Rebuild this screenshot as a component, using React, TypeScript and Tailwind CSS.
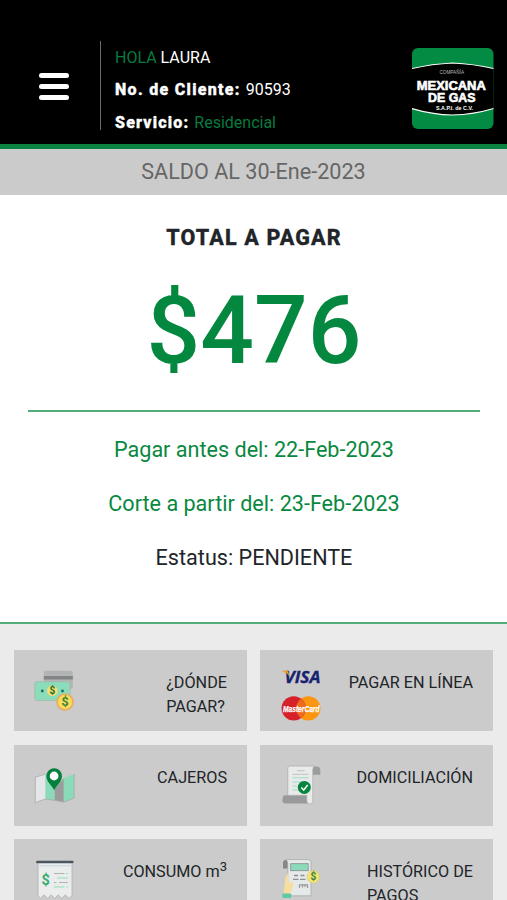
import React from 'react'

function Logo() {
    return (
        <svg width="82" height="82" viewBox="0 0 82 82" fontFamily="Liberation Sans, Arial, sans-serif" fontWeight="bold" fill="#fff">
            <rect width="81.5" height="81" y="0" rx="6" fill="#038a43" />
            <path d="M0 20.5Q20 16 40.5 15Q62 16 81.5 20.5V60.5Q62 66.5 40.5 67Q20 66.5 0 60.5Z" fill="#000" />
            <path d="M0 20.5Q20 16 40.5 15Q62 16 81.5 20.5M0 60.5Q20 66.5 40.5 67Q62 66.5 81.5 60.5" fill="none" stroke="#fff" strokeWidth="1.2" />
            <text x="27.5" y="26.3" fontSize="4.6" fontWeight="normal" fill="#bbb" textLength="24.5" lengthAdjust="spacingAndGlyphs">COMPAÑÍA</text>
            <text x="4.8" y="41.7" fontSize="12.5" stroke="#fff" strokeWidth=".6" textLength="69" lengthAdjust="spacingAndGlyphs">MEXICANA</text>
            <text x="16" y="54.4" fontSize="12.5" stroke="#fff" strokeWidth=".6" textLength="47.5" lengthAdjust="spacingAndGlyphs">DE GAS</text>
            <text x="24" y="61.5" fontSize="5.2" textLength="37" lengthAdjust="spacingAndGlyphs">S.A.P.I. de C.V.</text>
        </svg>
    )
}

function CashIcon() {
    return (
        <svg width="42" height="42" viewBox="0 0 42 42" fontFamily="Roboto, sans-serif" fontWeight="bold" textAnchor="middle">
            <rect x="9.8" y=".8" width="29" height="18" rx="1.5" fill="#b2b4b5" />
            <rect x="9.8" y="6" width="29" height="3.5" fill="#828586" />
            <rect x=".8" y="11.7" width="35.2" height="18.8" rx="1.8" fill="#8bdcb9" stroke="#a9b5b0" strokeWidth=".8" />
            <circle cx="18.3" cy="20.8" r="5.3" fill="#f3df72" />
            <circle cx="8.3" cy="21" r="1.4" fill="#176d65" />
            <circle cx="28.5" cy="21" r="1.4" fill="#176d65" />
            <text x="18.3" y="24.4" fontSize="10" fill="#236a2c">$</text>
            <circle cx="31" cy="32" r="8" fill="#f8dc59" stroke="#e8ab65" strokeWidth="1.6" />
            <text x="31" y="36.4" fontSize="12.5" fill="#3c8438">$</text>
        </svg>
    )
}

function CardsIcon() {
    return (
        <svg width="42" height="54" viewBox="0 0 42 54" className="overflow-visible" fontStyle="italic" fontWeight="bold">
            <text x="4.5" y="12.6" fontSize="16" fontFamily="Open Sans, sans-serif" fill="#17216f" stroke="#17216f" strokeWidth=".3" textLength="36" lengthAdjust="spacingAndGlyphs">VISA</text>
            <path d="M2.5 1H7.5L9.2 5.5Q6.5 2.2 2.5 1Z" fill="#ee9f20" stroke="#ee9f20" strokeWidth=".5" />
            <circle cx="28.3" cy="38.4" r="12.1" fill="#fc9510" />
            <circle cx="13.7" cy="38.4" r="12.1" fill="#d6212b" />
            <path d="M21 28.7A12.1 12.1 0 0 1 21 48.1A12.1 12.1 0 0 1 21 28.7Z" fill="#ed6b1c" />
            <text x="3" y="41.8" fontSize="8.5" fontFamily="Liberation Sans, Arial, sans-serif" fill="#fff" stroke="#fff" strokeWidth=".25" textLength="36.5" lengthAdjust="spacingAndGlyphs">MasterCard</text>
        </svg>
    )
}

function MapIcon() {
    return (
        <svg width="42" height="42" viewBox="0 0 42 42">
            <path d="M1.3 12.3L11.5 9V34L1.3 37.6Z" fill="#e4e6e7" />
            <path d="M11.5 9L20.7 12V35.5L11.5 34Z" fill="#8bdab9" />
            <path d="M20.7 23L29.8 13V37L20.7 35.2Z" fill="#999c9a" />
            <path d="M20.7 13H29.8L20.7 24Z" fill="#c9cdcb" />
            <path d="M29.8 13L40.2 9V33L29.8 37.2Z" fill="#8bdab9" />
            <path d="M1.3 12.3L11.5 9M40.2 9V33L29.8 37.2L20.7 35.4L11.5 34L1.3 37.6V12.3" fill="none" stroke="#aaa" strokeWidth=".8" />
            <path d="M20.2 25.2C18 20.5 12.4 17 12.4 11A7.8 7.8 0 0 1 28 11C28 17 22.4 20.5 20.2 25.2Z" fill="#04803d" />
            <circle cx="20.1" cy="11" r="4.4" fill="#fff" />
        </svg>
    )
}

function DocumentIcon() {
    return (
        <svg width="42" height="42" viewBox="0 0 42 42">
            <path d="M30 1.4H36.5Q40.3 1.4 40.3 5V9.8H32Z" fill="#9a9c9d" />
            <path d="M3.6 30.3H28V38.6H6Q2.3 38.6 2.3 35Z" fill="#989a9b" />
            <path d="M7.8 30.3V3.2Q7.8 1 10 1H35Q32.8 1.5 32.8 4.4V35.5Q32.8 39 29.8 39Q27 39 26.8 35.5V30.3Z" fill="#e9ebeb" stroke="#aaa" strokeWidth=".7" />
            <path d="M17 5.7H24.5M12.5 9.3H28.5" stroke="#b9bcbc" strokeWidth=".9" />
            <path d="M12.5 12.8H28.5M12.5 17H22M12.5 21H17M12.5 25H18" stroke="#9bdcc2" strokeWidth="1" />
            <circle cx="24.3" cy="22.4" r="6.5" fill="#078440" />
            <path d="M21.3 22.5L23.7 25L27.7 20" fill="none" stroke="#fff" strokeWidth="1.5" />
        </svg>
    )
}

function ReceiptIcon() {
    return (
        <svg width="42" height="42" viewBox="0 0 42 42">
            <path d="M4 3.5H38V36.3L35.2 39.5L31.4 35.8L27.7 39.5L24.2 35.8L20.8 39.5L17.2 35.8L13.7 39.5L10 35.8L6.5 39.5L4 36.3Z" fill="#ebecec" stroke="#aaa" strokeWidth=".7" />
            <path d="M4 6.8H38" stroke="#d2dbe3" strokeWidth="1.5" />
            <rect x="2" y="1.8" width="37.6" height="2.5" rx="1.2" fill="#4c5661" />
            <text x="11.7" y="25.8" textAnchor="middle" fontFamily="Roboto, sans-serif" fontWeight="bold" fontSize="14.5" fill="#36ac70">$</text>
            <path d="M20 14.5H30.5M20 23.5H22.5M25 23.5H34" stroke="#afb3b3" strokeWidth="1" />
            <path d="M32 14.5H34M23 19H34M20 28H30.5M32.5 28H34" stroke="#91dfbd" strokeWidth="1" />
        </svg>
    )
}

function HistoryIcon() {
    return (
        <svg width="42" height="42" viewBox="0 0 42 42">
            <path d="M4.6 1H10V9.5H3V3Z" fill="#838788" />
            <path d="M5.5 .6H28.5Q31 .6 31 3V36.8H7.8V4Q7.8 1.5 5.5 .6Z" fill="#e6e9e9" stroke="#a8aaaa" strokeWidth=".8" />
            <rect x="10.7" y="4.7" width="17.5" height="7" fill="#8bdab9" stroke="#858b8a" strokeWidth=".8" />
            <path d="M14 16.5H18M20.5 16.5H24.5" stroke="#8c9090" strokeWidth="1.3" />
            <path d="M13 20.3H18.5M20 20.3H25.5" stroke="#8c9090" strokeWidth="1.3" />
            <path d="M19.5 29V25.8H27.5V29M22.5 28.5V26M25 28V26" fill="none" stroke="#969999" strokeWidth="1.2" />
            <path d="M8.2 14.2Q5.2 17 5 23L3.5 34.5H10.5L11.8 30.5Q13.4 28 13.2 23.5Q11 22.3 9 24.5Z" fill="#f8dda0" />
            <rect x="2.3" y="34.4" width="9" height="4.5" rx="1" fill="#62caa1" />
            <circle cx="33.3" cy="17.8" r="6.2" fill="#efe474" stroke="#d3ca78" strokeWidth=".6" />
            <text x="33.3" y="21.3" textAnchor="middle" fontFamily="Roboto, sans-serif" fontWeight="bold" fontSize="10" fill="#3a7e3d">$</text>
        </svg>
    )
}

const options = [
    { icon: <CashIcon />, label: <>¿DÓNDE<br />PAGAR?</> },
    { icon: <CardsIcon />, label: <>PAGAR EN LÍNEA</> },
    { icon: <MapIcon />, label: <>CAJEROS</> },
    { icon: <DocumentIcon />, label: <>DOMICILIACIÓN</> },
    { icon: <ReceiptIcon />, label: <>CONSUMO m<sup className="text-[13px]">3</sup></> },
    { icon: <HistoryIcon />, label: <>HISTÓRICO DE<br />PAGOS</> },
]

function Header() {
    return (
        <header className="flex h-[149px] shrink-0 border-b-[5px] border-[#09833f] bg-black pt-[41px] text-white">
            <button className="ml-[39px] mt-[32px] flex h-[27px] w-[30px] flex-col justify-between" aria-label="Menú">
                <span className="h-[5px] w-full rounded-full bg-white" />
                <span className="h-[5px] w-full rounded-full bg-white" />
                <span className="h-[5px] w-full rounded-full bg-white" />
            </button>
            <div className="ml-[31px] h-[89px] border-l border-[#6b6b6b] pl-[14px] pt-px text-base leading-[32.3px]">
                <p><span className="text-[#087b3f]">HOLA</span> LAURA</p>
                <p><b className="mr-px font-extrabold tracking-[1.3px] [-webkit-text-stroke:0.4px_#fff]">No. de Cliente:</b> 90593</p>
                <p><b className="mr-px font-extrabold tracking-[1.2px] [-webkit-text-stroke:0.4px_#fff]">Servicio:</b> <span className="text-[#087b3f]">Residencial</span></p>
            </div>
            <div className="ml-auto mr-[13px] mt-[7px]">
                <Logo />
            </div>
        </header>
    )
}

export default function App() {
    return (
        <div className="flex h-[900px] w-[507px] flex-col overflow-hidden bg-white font-[Roboto,sans-serif] text-[#212529]">
            <Header />
            <div className="h-[46px] shrink-0 bg-[#cbcbcb] text-center text-[21.6px] leading-[45px] text-[#666]">SALDO AL 30-Ene-2023</div>
            <main className="h-[429px] shrink-0 border-b-2 border-[#53ad7b] pl-7 pr-[27px] text-center text-[21.6px]">
                <h1 className="pt-[27px] text-[21.5px] font-extrabold leading-8 tracking-[1.15px] [-webkit-text-stroke:0.3px_#212529]">TOTAL A PAGAR</h1>
                <p className="mt-[21px] h-[135px] text-[94.5px] font-medium leading-[112px] text-[#04883f]">$476</p>
                <hr className="border-t-2 border-[#53ad7b]" />
                <p className="mt-[22px] leading-8 text-[#09883f]">Pagar antes del: 22-Feb-2023</p>
                <p className="mt-[22px] leading-8 text-[#09883f]">Corte a partir del: 23-Feb-2023</p>
                <p className="mt-[22px] leading-8">Estatus: PENDIENTE</p>
            </main>
            <section className="grid flex-1 auto-rows-[81px] grid-cols-2 gap-x-[13px] gap-y-[13.5px] bg-[#ebebeb] px-[14px] pt-[26px]">
                {options.map((option, i) => (
                    <div key={i} className="flex justify-between bg-[#cbcbcb] px-5 pt-5">
                        {option.icon}
                        <p className="pt-px text-[16.2px] leading-6">{option.label}</p>
                    </div>
                ))}
            </section>
        </div>
    )
}
